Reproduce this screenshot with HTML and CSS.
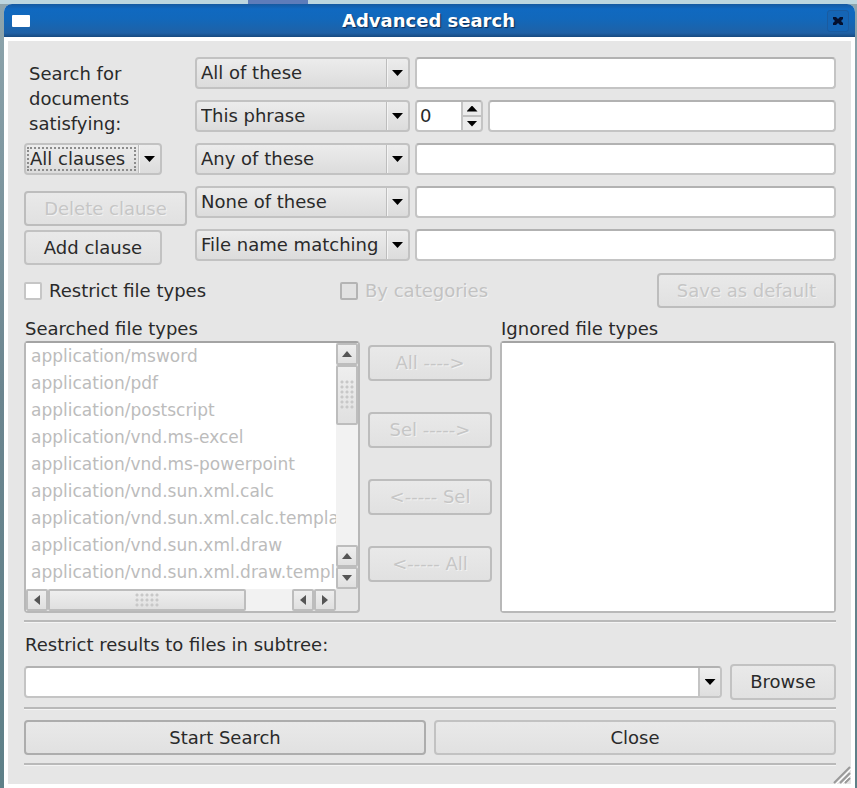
FILE: index.html
```html
<!DOCTYPE html>
<html lang="en">
<head>
<meta charset="utf-8">
<title>Advanced search</title>
<link rel="stylesheet" href="styles.css">
</head>
<body>
<div class="window">
  <header class="titlebar">
    <span class="window-icon"></span>
    <h1 class="title">Advanced search</h1>
    <button class="close" type="button" aria-label="Close window">
      <svg width="14" height="14" viewBox="0 0 14 14"><path d="M2 3h3l2 2 2-2h3v2L10 7l2 2v2H9L7 9l-2 2H2V9l2-2-2-2z" fill="#04102e"/></svg>
    </button>
  </header>

  <main class="body">
    <section class="clauses">
      <div class="side">
        <label class="side-label" for="conj">Search for documents satisfying:</label>
        <div class="combo combo-focus">
          <select id="conj"><option>All clauses</option><option>Any clause</option></select>
          <span class="combo-arrow"><i class="tri down"></i></span>
        </div>
        <button class="btn delete" type="button" disabled>Delete clause</button>
        <button class="btn add" type="button">Add clause</button>
      </div>
      <div class="rows">
        <div class="row">
          <div class="combo"><select aria-label="Clause 1 type"><option>All of these</option></select><span class="combo-arrow"><i class="tri down"></i></span></div>
          <input class="field" type="text" aria-label="Clause 1 text">
        </div>
        <div class="row">
          <div class="combo"><select aria-label="Clause 2 type"><option>This phrase</option></select><span class="combo-arrow"><i class="tri down"></i></span></div>
          <div class="spin">
            <input type="text" inputmode="numeric" value="0" aria-label="Slack">
            <div class="spin-buttons">
              <button type="button" aria-label="Increase"><i class="tri up"></i></button>
              <button type="button" aria-label="Decrease"><i class="tri down"></i></button>
            </div>
          </div>
          <input class="field" type="text" aria-label="Clause 2 text">
        </div>
        <div class="row">
          <div class="combo"><select aria-label="Clause 3 type"><option>Any of these</option></select><span class="combo-arrow"><i class="tri down"></i></span></div>
          <input class="field" type="text" aria-label="Clause 3 text">
        </div>
        <div class="row">
          <div class="combo"><select aria-label="Clause 4 type"><option>None of these</option></select><span class="combo-arrow"><i class="tri down"></i></span></div>
          <input class="field" type="text" aria-label="Clause 4 text">
        </div>
        <div class="row">
          <div class="combo"><select aria-label="Clause 5 type"><option>File name matching</option></select><span class="combo-arrow"><i class="tri down"></i></span></div>
          <input class="field" type="text" aria-label="Clause 5 text">
        </div>
      </div>
    </section>

    <section class="options">
      <label class="check restrict"><input type="checkbox">Restrict file types</label>
      <label class="check disabled"><input type="checkbox" disabled>By categories</label>
      <button class="btn save" type="button" disabled>Save as default</button>
    </section>

    <section class="types">
      <div class="list-col">
        <label for="searched">Searched file types</label>
        <div class="list">
          <select id="searched" multiple disabled>
            <option>application/msword</option>
            <option>application/pdf</option>
            <option>application/postscript</option>
            <option>application/vnd.ms-excel</option>
            <option>application/vnd.ms-powerpoint</option>
            <option>application/vnd.sun.xml.calc</option>
            <option>application/vnd.sun.xml.calc.template</option>
            <option>application/vnd.sun.xml.draw</option>
            <option>application/vnd.sun.xml.draw.template</option>
          </select>
          <div class="vbar">
            <span class="step"><i class="tri small up"></i></span>
            <span class="thumb"><i class="dots tall"></i></span>
            <span class="track"></span>
            <span class="step"><i class="tri small up"></i></span>
            <span class="step"><i class="tri small down"></i></span>
          </div>
          <div class="hbar">
            <span class="step"><i class="tri small left"></i></span>
            <span class="thumb"><i class="dots wide"></i></span>
            <span class="track"></span>
            <span class="step"><i class="tri small left"></i></span>
            <span class="step"><i class="tri small right"></i></span>
          </div>
        </div>
      </div>
      <div class="movers">
        <button class="btn" type="button" disabled>All ----&gt;</button>
        <button class="btn" type="button" disabled>Sel -----&gt;</button>
        <button class="btn" type="button" disabled>&lt;----- Sel</button>
        <button class="btn" type="button" disabled>&lt;----- All</button>
      </div>
      <div class="list-col">
        <label for="ignored">Ignored file types</label>
        <div class="list plain"><select id="ignored" multiple disabled></select></div>
      </div>
    </section>

    <hr>
    <section class="subtree">
      <label for="subtree">Restrict results to files in subtree:</label>
      <div class="subtree-row">
        <div class="edit-combo">
          <input id="subtree" type="text">
          <button type="button" aria-label="Show folders"><i class="tri down"></i></button>
        </div>
        <button class="btn browse" type="button">Browse</button>
      </div>
    </section>
    <hr>
    <section class="actions">
      <button class="btn default" type="button">Start Search</button>
      <button class="btn" type="button">Close</button>
    </section>
    <hr>
    <svg class="grip" width="18" height="18" viewBox="0 0 18 18"><path d="M1 17L17 1M7 17L17 7M12 17l5-5" stroke="#999" stroke-width="2"/><path d="M3 18L18 3M9 18l9-9" stroke="#fff" stroke-width="1"/></svg>
  </main>
</div>
</body>
</html>
```
FILE: styles.css
```css
* { box-sizing: border-box; }

body {
  margin: 0;
  min-height: 100vh;
  display: flex;
  padding: 4px 2px 0 4px;
  font: 18px/24px "DejaVu Sans", sans-serif;
  color: #2a2a2a;
  background:
    linear-gradient(90deg, transparent 248px, #5d7cba 248px, #5d7cba 308px, transparent 308px) top / 100% 4px no-repeat,
    linear-gradient(#bcd6df, #bcd6df) top / 100% 4px no-repeat,
    linear-gradient(#8ea5ad, #6b858f 50%, #5e8088);
}

button, input, select { font: inherit; color: inherit; margin: 0; }

.window {
  flex: 1;
  display: flex;
  flex-direction: column;
  border-radius: 8px 8px 0 0;
  overflow: hidden;
  background: #fff;
}

.titlebar {
  height: 33px;
  display: flex;
  align-items: center;
  padding: 0 6px 0 8px;
  background: linear-gradient(#1559a0, #1069c0 15%, #1268bb 45%, #1f61a6 88%, #174a80);
}
.window-icon { width: 18px; height: 12px; background: #fff; border-radius: 1px; }
.title {
  flex: 1;
  margin: 0;
  text-align: center;
  font-size: 18px;
  color: #fff;
  text-shadow: 1px 1px 1px #0a2c58;
}
.close {
  width: 22px;
  height: 22px;
  padding: 0;
  display: grid;
  place-items: center;
  border: 1px solid #1a5ba0;
  border-radius: 3px;
  background: #1565b5;
}

.body {
  flex: 1;
  position: relative;
  margin: 4px;
  padding: 16px 15px 0 16px;
  background: #e6e6e6;
}

.clauses { display: flex; gap: 8px; }
.side {
  width: 163px;
  display: flex;
  flex-direction: column;
  align-items: flex-start;
}
.side-label { width: 130px; padding: 4px 0 0 5px; line-height: 25px; margin-bottom: 7px; }
.side .combo { width: 138px; }
.delete { width: 163px; margin: 16px 0 4px; }
.add { width: 138px; }
.rows { flex: 1; display: flex; flex-direction: column; gap: 11px; }
.row { display: flex; gap: 5px; }
.row .combo { width: 215px; }

.combo {
  height: 32px;
  display: grid;
  grid-template: minmax(0, 1fr) / minmax(0, 1fr);
  border: 2px solid #c2c2c2;
  border-radius: 4px;
  background: linear-gradient(#ececec, #dcdcdc);
}
.combo > * { grid-area: 1 / 1; }
.combo select {
  appearance: none;
  min-width: 0;
  padding: 0 0 0 4px;
  border: 0;
  outline: 0;
  background: none;
}
.combo-arrow {
  justify-self: end;
  width: 22px;
  display: grid;
  place-items: center;
  border-left: 1px solid #bdbdbd;
  box-shadow: inset 1px 0 #f4f4f4;
  pointer-events: none;
}
.combo.combo-focus select {
  margin: 2px 24px 2px 1px;
  padding: 0 0 0 1px;
  border: 2px dotted #8c8c8c;
  line-height: 20px;
}

.tri { width: 11px; height: 6px; background: #000; }
.down { clip-path: polygon(0 0, 100% 0, 50% 100%); }
.up { clip-path: polygon(0 100%, 100% 100%, 50% 0); }
.small { width: 10px; height: 6px; background: #555; }
.left { width: 6px; height: 10px; clip-path: polygon(100% 0, 100% 100%, 0 50%); }
.right { width: 6px; height: 10px; clip-path: polygon(0 0, 0 100%, 100% 50%); }

.field, .spin, .edit-combo {
  flex: 1;
  min-width: 0;
  height: 32px;
  border: 2px solid #c4c4c4;
  border-top-color: #b2b2b2;
  border-radius: 4px;
  background: #fff;
}
.spin { flex: 0 0 68px; display: flex; overflow: hidden; }
.spin input, .edit-combo input {
  flex: 1;
  min-width: 0;
  padding: 0 0 0 3px;
  border: 0;
  background: none;
}
.spin-buttons {
  width: 20px;
  display: grid;
  gap: 2px;
  border-left: 2px solid #c4c4c4;
  background: #c0c0c0;
}
.spin-buttons button, .edit-combo button {
  padding: 0;
  display: grid;
  place-items: center;
  border: 0;
  background: #ebebeb;
}
.edit-combo { display: flex; overflow: hidden; }
.edit-combo button { width: 22px; border-left: 2px solid #c4c4c4; background: linear-gradient(#efefef, #dedede); }

.btn {
  height: 35px;
  padding: 0;
  border: 2px solid #c2c2c2;
  border-radius: 4px;
  background: linear-gradient(#e9e9e9, #e1e1e1);
}
.btn:disabled { color: #c6c6c6; border-color: #bdbdbd; text-shadow: 1px 1px #f2f2f2; }
.btn.default { border-color: #adadad; }

.options { display: flex; align-items: center; margin-top: 8px; }
.check { display: flex; align-items: center; gap: 7px; }
.restrict { width: 316px; }
.check input {
  appearance: none;
  width: 18px;
  height: 18px;
  border: 2px solid #c6c6c6;
  border-radius: 2px;
  background: #fff;
}
.check.disabled { color: #c2c2c2; text-shadow: 1px 1px #f2f2f2; }
.check.disabled input { border-color: #b4b4b4; background: #e2e2e2; }
.save { width: 179px; margin-left: auto; }

.types { display: flex; gap: 8px; margin-top: 9px; }
.list-col { flex: 1; min-width: 0; display: flex; flex-direction: column; }
.list-col > label { padding-left: 1px; }
.list {
  height: 272px;
  display: grid;
  grid-template: minmax(0, 1fr) 22px / minmax(0, 1fr) 22px;
  border: 2px solid #b8b8b8;
  border-top-color: #a4a4a4;
  border-radius: 4px;
  background: #e6e6e6;
}
.list.plain { grid-template: minmax(0, 1fr) / minmax(0, 1fr); }
.list select {
  padding: 3px 0 0;
  border: 0;
  border-radius: 0;
  overflow: hidden;
  opacity: 1;
  font-size: 17px;
  background: #fff;
}
.list option { padding: 0 0 0 5px; min-height: 27px; line-height: 27px; color: #bcbcbc; }
.vbar, .hbar { display: flex; background: #f2f2f2; }
.vbar { flex-direction: column; }
.step, .thumb {
  display: grid;
  place-items: center;
  border: 2px solid #bdbdbd;
  border-radius: 2px;
  background: linear-gradient(#eee, #e0e0e0);
}
.step { flex: 0 0 22px; }
.vbar .thumb { height: 60px; }
.hbar .thumb { width: 198px; }
.track { flex: 1; }
.dots { background: radial-gradient(circle at 2px 2px, #c8c8c8 1px, transparent 2px) 0 0 / 5px 5px; }
.tall { width: 15px; height: 30px; }
.wide { width: 25px; height: 15px; }

.movers {
  flex: 0 0 124px;
  display: flex;
  flex-direction: column;
  gap: 31px;
  padding-top: 28px;
}
.movers .btn { height: 36px; }

hr { height: 3px; margin: 7px 0; border: 0; background: #b9b9b9; border-bottom: 1px solid #f4f4f4; }

.subtree { padding-top: 3px; }
.subtree label { display: block; padding: 0 0 7px 1px; }
.subtree-row { display: flex; align-items: center; gap: 8px; }
.browse { width: 106px; height: 36px; }
.actions { display: grid; grid-template-columns: 1fr 1fr; gap: 8px; padding: 3px 0 1px; }
.actions .btn { height: 35px; }
.grip { position: absolute; right: 0; bottom: 0; }
```
